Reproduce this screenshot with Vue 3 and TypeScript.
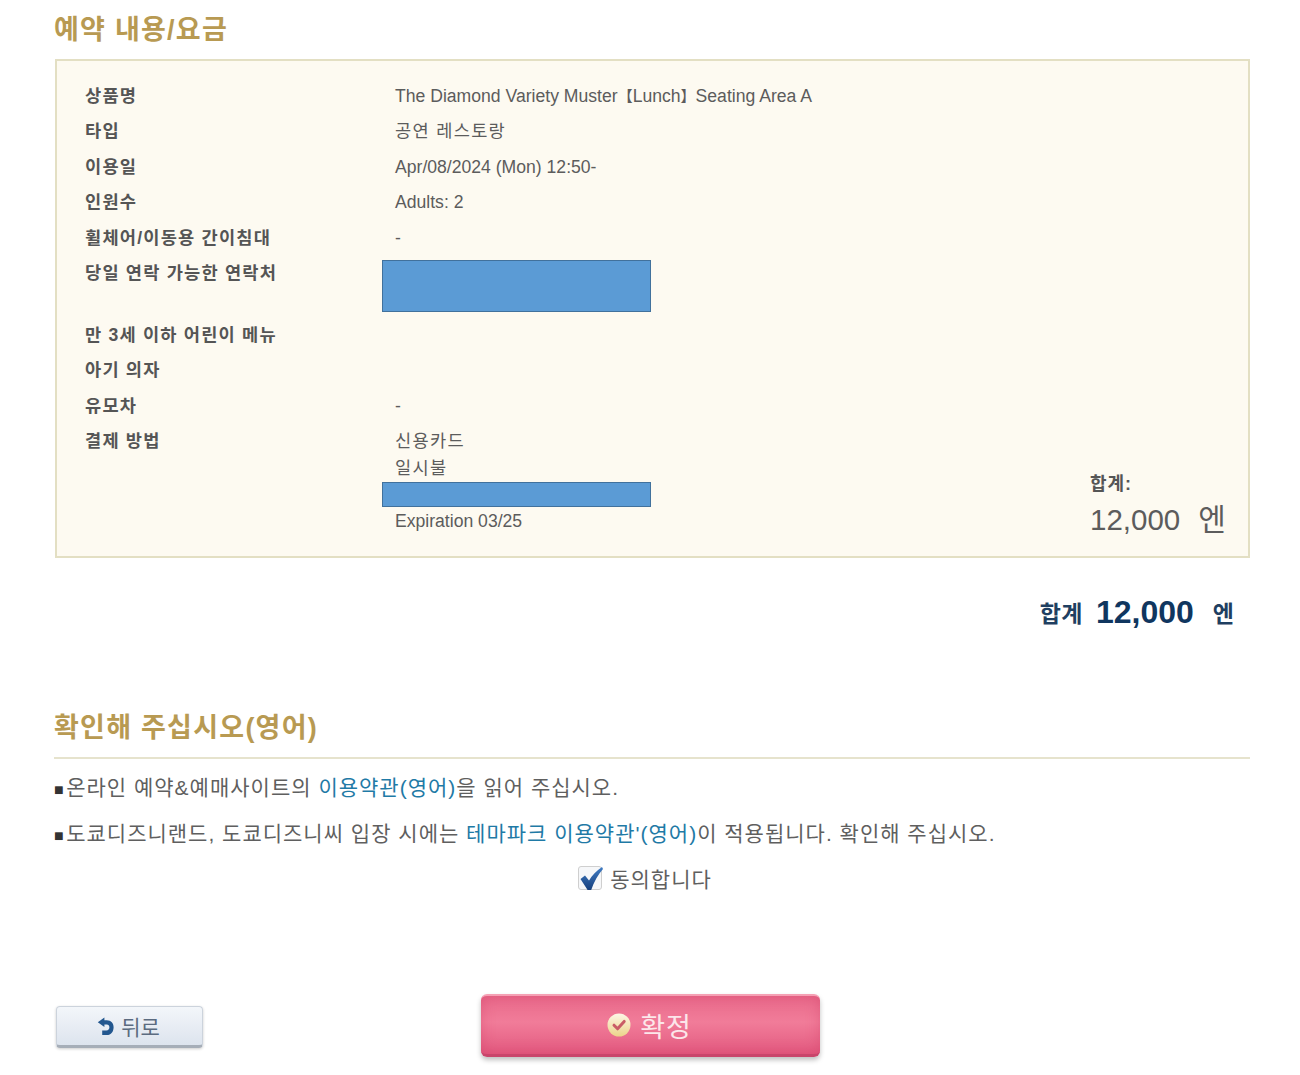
<script setup lang="ts">
interface Row { label: string; value: string; ko?: boolean }
const rows: Row[] = [
  { label: '타입', value: '공연 레스토랑', ko: true },
  { label: '이용일', value: 'Apr/08/2024 (Mon) 12:50-' },
  { label: '인원수', value: 'Adults: 2' },
  { label: '휠체어/이동용 간이침대', value: '-' },
]
const rowsAfter: Row[] = [
  { label: '만 3세 이하 어린이 메뉴', value: '' },
  { label: '아기 의자', value: '' },
  { label: '유모차', value: '-' },
]
</script>

<template>
  <main class="page">
    <h2 class="heading">예약 내용/요금</h2>
    <section class="box">
      <div class="details">
        <div class="row">
          <div class="label">상품명</div>
          <div class="value">The Diamond Variety Muster<span class="br">【</span>Lunch<span class="br">】</span>Seating Area A</div>
        </div>
        <div v-for="r in rows" :key="r.label" class="row">
          <div class="label">{{ r.label }}</div>
          <div class="value" :class="{ ko: r.ko }">{{ r.value }}</div>
        </div>
        <div class="row row-contact">
          <div class="label">당일 연락 가능한 연락처</div>
          <div class="redact redact-tall"></div>
        </div>
        <div v-for="r in rowsAfter" :key="r.label" class="row">
          <div class="label">{{ r.label }}</div>
          <div class="value">{{ r.value }}</div>
        </div>
        <div class="row row-pay">
          <div class="label">결제 방법</div>
          <div class="pay">
            <div class="value ko pay-line">신용카드</div>
            <div class="value ko pay-line">일시불</div>
            <div class="redact redact-short"></div>
            <div class="value pay-line">Expiration 03/25</div>
          </div>
        </div>
      </div>
      <div class="subtotal">
        <div class="subtotal-label">합계:</div>
        <div class="subtotal-amount"><span>12,000</span><span class="subtotal-yen">엔</span></div>
      </div>
    </section>

    <div class="grand">
      <span class="grand-label">합계</span>
      <span class="grand-num">12,000</span>
      <span class="grand-yen">엔</span>
    </div>

    <h2 class="heading heading-2">확인해 주십시오(영어)</h2>
    <p class="note note-1"><span class="sq">■</span>온라인 예약&amp;예매사이트의 <a class="link">이용약관(영어)</a>을 읽어 주십시오.</p>
    <p class="note"><span class="sq">■</span>도쿄디즈니랜드, 도쿄디즈니씨 입장 시에는 <a class="link">테마파크 이용약관'(영어)</a>이 적용됩니다. 확인해 주십시오.</p>

    <div class="agree">
      <span class="check">
        <svg class="check-mark" viewBox="0 0 24 24" width="24" height="24">
          <defs>
            <linearGradient id="ckg" x1="0" y1="0" x2="0" y2="1">
              <stop offset="0" stop-color="#3f7cc4" />
              <stop offset="1" stop-color="#173f7c" />
            </linearGradient>
          </defs>
          <path d="M1.5 13 L6 9.6 L10 14.6 C13 9.5 17.5 4.5 23 1 L24 3 C19 8.5 15 15.5 12.2 24 L8.6 24 Z" fill="url(#ckg)" />
        </svg>
      </span>
      <span class="agree-text">동의합니다</span>
    </div>

    <div class="actions">
      <button class="btn-back" type="button">
        <svg viewBox="0 0 17 19" width="17" height="19">
          <path d="M7.4 0.5 L0.8 5.2 L7.4 9.9 V7.4 H9.8 C11.4 7.4 12.4 8.6 12.4 10.2 C12.4 12 11.3 13.4 9.4 13.4 H5.2 V18 H9.8 C14.2 18 16.6 14.6 16.6 10.2 C16.6 6.2 14.2 3.2 9.8 3.2 H7.4 Z" fill="#23578f" />
        </svg>
        <span>뒤로</span>
      </button>
      <button class="btn-ok" type="button">
        <svg viewBox="0 0 24 24" width="24" height="24">
          <defs>
            <linearGradient id="okg" x1="0" y1="0" x2="0" y2="1">
              <stop offset="0" stop-color="#fdf7e6" />
              <stop offset="1" stop-color="#ecd38a" />
            </linearGradient>
          </defs>
          <circle cx="12" cy="12" r="11.5" fill="url(#okg)" />
          <path d="M7 12.2 L10.6 15.8 L17.2 8.4" fill="none" stroke="#c95c66" stroke-width="3" stroke-linecap="round" stroke-linejoin="round" />
        </svg>
        <span>확정</span>
      </button>
    </div>
  </main>
</template>

<style scoped>
.page {
  width: 1300px;
  height: 1075px;
  box-sizing: border-box;
  padding: 0 50px 0 54px;
  font-family: "Liberation Sans", "Noto Sans CJK KR", sans-serif;
  color: #555;
  overflow: hidden;
  background: #fff;
}
.heading {
  margin: 0;
  height: 59px;
  line-height: 60px;
  font-size: 27px;
  font-weight: 700;
  letter-spacing: 1.25px;
  color: #b89a52;
}
.box {
  margin-left: 1px;
  height: 499px;
  box-sizing: border-box;
  border: 2px solid #e3dfc3;
  background: #fdfaf1;
  padding: 18px 0 0 28px;
  display: flex;
  justify-content: space-between;
}
.details { width: 760px; }
.row {
  display: grid;
  grid-template-columns: 310px 1fr;
  height: 35.4px;
  line-height: 35.4px;
  font-size: 17.6px;
}
.label { font-weight: 700; letter-spacing: 1.2px; color: #555; white-space: nowrap; }
.value { color: #5c5c5c; white-space: nowrap; }
.ko { letter-spacing: 1.3px; }
.br { font-size: 15px; }
.row-contact { height: 62px; }
.redact {
  margin-left: -13px;
  width: 269px;
  box-sizing: border-box;
  background: #5b9bd5;
  border: 1.5px solid #41719c;
}
.redact-tall { height: 52px; margin-top: 4px; }
.redact-short { height: 25px; margin-bottom: 1px; }
.row-pay { height: auto; }
.pay-line { height: 27px; line-height: 27px; }
.pay { padding-top: 4px; }
.subtotal {
  align-self: flex-end;
  width: 158px;
  padding-bottom: 13px;
}
.subtotal-label { font-size: 18px; font-weight: 700; letter-spacing: 1px; color: #555; line-height: 26px; }
.subtotal-amount {
  font-size: 29.5px;
  line-height: 46px;
  color: #5c5c5c;
  display: flex;
  gap: 18px;
}
.subtotal-yen { font-size: 30px; }
.grand {
  margin-top: 32px;
  height: 44px;
  padding-right: 16px;
  display: flex;
  justify-content: flex-end;
  align-items: center;
  color: #1f3f61;
}
.grand-label, .grand-yen { font-size: 23px; font-weight: 700; }
.grand-label { letter-spacing: 0.5px; }
.grand-num { font-size: 32px; font-weight: 700; color: #10365f; margin: 0 19px 0 13px; }
.heading-2 {
  margin-top: 71px;
  height: 52px;
  line-height: 46px;
  border-bottom: 2px solid #e6e3cd;
}
.note {
  margin: 0;
  height: 46px;
  font-size: 21px;
  line-height: 46px;
  letter-spacing: 1px;
  color: #5f5f5f;
  white-space: nowrap;
}
.note-1 { margin-top: 6px; }
.sq { font-size: 16px; letter-spacing: 1px; padding-right: 1.5px; color: #333; }
.link { color: #1f7aa6; }
.agree {
  height: 42px;
  display: flex;
  align-items: center;
  justify-content: center;
  gap: 8px;
  margin-left: -14px;
}
.check {
  width: 24px;
  height: 24px;
  box-sizing: border-box;
  border: 1px solid #cfcfcf;
  border-radius: 3px;
  background: #f6f7f9;
  position: relative;
}
.check-mark { position: absolute; left: 0; top: -1px; }
.agree-text { font-size: 21px; letter-spacing: 1px; color: #5f5f5f; }
.actions {
  margin-top: 95px;
  display: flex;
  align-items: center;
  padding-left: 2px;
}
.btn-back {
  width: 147px;
  height: 42px;
  margin-top: 3px;
  border: 1px solid #ccd3dc;
  border-bottom: 3px solid #a6aeb8;
  border-radius: 4px;
  background: linear-gradient(#f3f6fa, #dde4ee);
  box-shadow: 0 1px 3px rgba(0,0,0,.2);
  display: flex;
  align-items: center;
  justify-content: center;
  gap: 7px;
  font: inherit;
  font-size: 21px;
  color: #5b6b80;
  padding: 0 2px 0 0;
}
.btn-ok {
  margin-left: 278px;
  width: 339px;
  height: 63px;
  border: 0;
  border-top: 2px solid #f5a0b4;
  border-bottom: 3px solid #c9456b;
  border-radius: 6px;
  background: linear-gradient(#e96a8b, #f17c99 45%, #e35a80);
  box-shadow: 0 3px 5px rgba(0,0,0,.25), inset 0 0 14px rgba(200,50,90,.35);
  display: flex;
  align-items: center;
  justify-content: center;
  gap: 9px;
  font: inherit;
  font-size: 27px;
  letter-spacing: 1px;
  color: #fce6ea;
  padding: 0 2px 0 0;
}
</style>
